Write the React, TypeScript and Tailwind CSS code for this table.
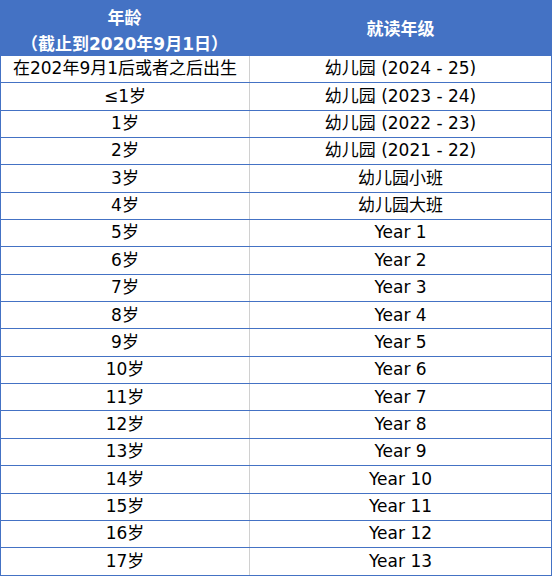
const rows: [string, string][] = [
  ["在202年9月1后或者之后出生", "幼儿园 (2024 - 25)"],
  ["≤1岁", "幼儿园 (2023 - 24)"],
  ["1岁", "幼儿园 (2022 - 23)"],
  ["2岁", "幼儿园 (2021 - 22)"],
  ["3岁", "幼儿园小班"],
  ["4岁", "幼儿园大班"],
  ["5岁", "Year 1"],
  ["6岁", "Year 2"],
  ["7岁", "Year 3"],
  ["8岁", "Year 4"],
  ["9岁", "Year 5"],
  ["10岁", "Year 6"],
  ["11岁", "Year 7"],
  ["12岁", "Year 8"],
  ["13岁", "Year 9"],
  ["14岁", "Year 10"],
  ["15岁", "Year 11"],
  ["16岁", "Year 12"],
  ["17岁", "Year 13"],
];

export default function App() {
  return (
    <div className="min-h-screen bg-white font-['DejaVu_Sans','Noto_Sans_CJK_SC',sans-serif]">
      <div className="w-[552px]">
        {/* Header */}
        <div className="flex h-[56px] bg-[#4472C4] text-white font-bold text-[17px]">
          <div className="w-[249px] flex flex-col items-center justify-center leading-[26px] pt-[5px]">
            <span>年龄</span>
            <span>（截止到2020年9月1日）</span>
          </div>
          <div className="flex-1 flex items-center justify-center pt-[4px]">就读年级</div>
        </div>

        {/* Body */}
        <div className="border-x border-[#4472C4] text-[17px] text-black">
          {rows.map(([age, grade]) => (
            <div key={age} className="flex h-[27.35px] border-b border-[#4472C4]">
              <div className="w-[248px] flex items-center justify-center whitespace-nowrap">{age}</div>
              <div className="flex-1 flex items-center justify-center border-l border-[#d0d0d0] whitespace-nowrap">
                {grade}
              </div>
            </div>
          ))}
        </div>
      </div>
    </div>
  );
}
